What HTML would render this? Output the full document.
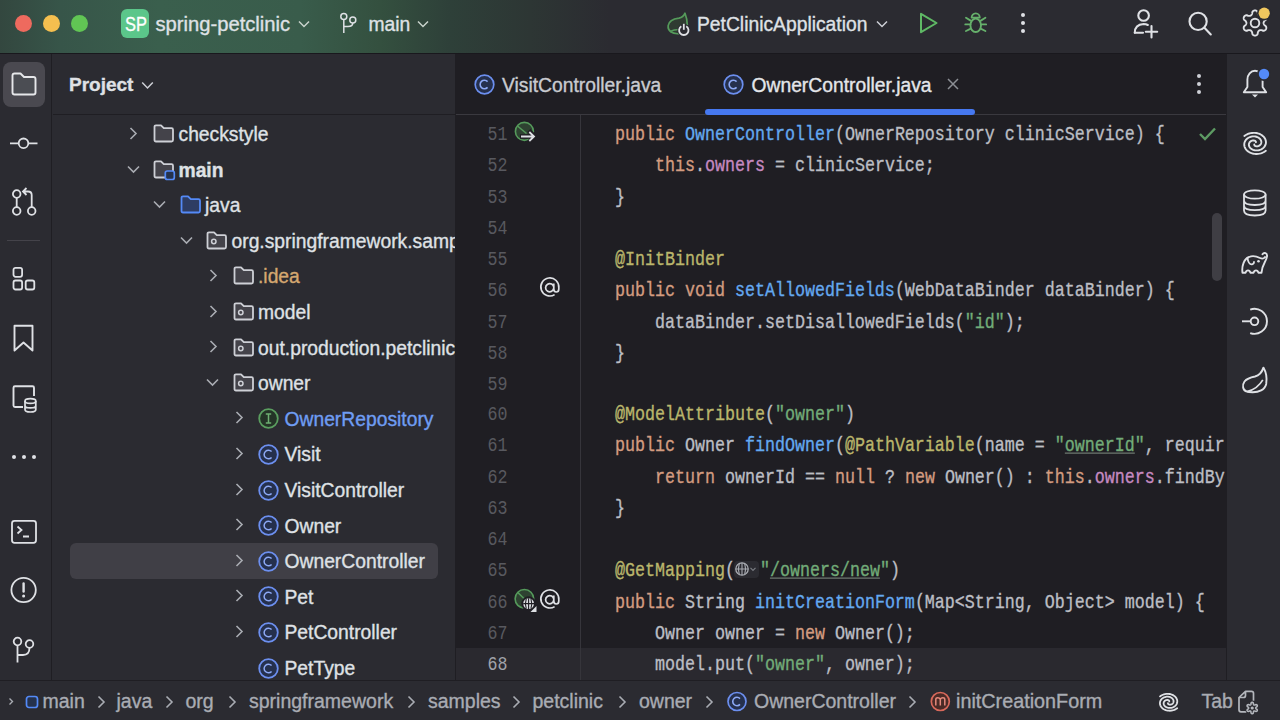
<!DOCTYPE html>
<html><head><meta charset="utf-8">
<style>
*{margin:0;padding:0;box-sizing:border-box}
html,body{width:1280px;height:720px;overflow:hidden;background:#2B2B31;font-family:"Liberation Sans",sans-serif;color:#DFE1E5}
.a{position:absolute}
svg{position:absolute;overflow:visible}
#title{left:0;top:0;width:1280px;height:53px;background:linear-gradient(90deg,#33473F 0px,#375549 60px,#3A5F4D 160px,#395C4B 300px,#34503F 380px,#2E4039 450px,#2D3634 530px,#2B2B31 610px)}
#tb-border{left:0;top:53px;width:1280px;height:1px;background:#19181D}
#lsb{left:51px;top:54px;width:1px;height:627px;background:#1F1E23}
#projb{left:455px;top:54px;width:1px;height:627px;background:#1F1E23}
#editor{left:456px;top:54px;width:770px;height:626px;background:#1F1E23;overflow:hidden}
#rsb{left:1226px;top:54px;width:1px;height:627px;background:#1F1E23}
#statb{left:0;top:680px;width:1280px;height:1px;background:#1F1E23}
.t{position:absolute;white-space:pre;font-size:19.3px;line-height:24px;-webkit-text-stroke:0.35px currentColor}
.code{position:absolute;white-space:pre;font-family:"Liberation Mono",monospace;font-size:16.67px;line-height:31.18px;color:#BCBEC4;left:575px;-webkit-text-stroke:0.3px currentColor}
.ln{position:absolute;white-space:pre;font-family:"Liberation Mono",monospace;font-size:16.67px;line-height:31.18px;color:#58595F;left:487.5px;width:22px}
.kw{color:#D39C80}.fn{color:#64A9F0}.fld{color:#C68AC1}.str{color:#72AC78}.ann{color:#BAB66C}
u{text-decoration-color:#6E7870}
</style></head><body>
<!-- TITLE BAR -->
<div class="a" id="title"></div>
<div class="a" id="tb-border"></div>
<div class="a" style="left:15px;top:14.5px;width:17px;height:17px;border-radius:50%;background:#EE6A5E"></div>
<div class="a" style="left:43px;top:14.5px;width:17px;height:17px;border-radius:50%;background:#F5BF4F"></div>
<div class="a" style="left:71px;top:14.5px;width:17px;height:17px;border-radius:50%;background:#61C554"></div>
<div class="a" style="left:121px;top:9px;width:28px;height:29px;border-radius:6px;background:#5BC68A"></div>
<div class="t" style="left:124.5px;top:12px;font-size:20px;color:#fff;transform:scaleX(0.82);transform-origin:0 0">SP</div>
<div class="t" style="left:155.5px;top:12.3px;font-size:20.2px">spring-petclinic</div>
<svg style="left:298px;top:20px" width="12" height="8"><path d="M1 1.5 L6 6.5 L11 1.5" fill="none" stroke="#C9D3CC" stroke-width="1.5"/></svg>
<svg style="left:338px;top:12px" width="20" height="24"><circle cx="5.8" cy="4.6" r="3" fill="none" stroke="#DFE1E5" stroke-width="1.5"/><circle cx="14.8" cy="8" r="3" fill="none" stroke="#DFE1E5" stroke-width="1.5"/><path d="M5.8 7.6 V21 M5.8 14.5 H10 Q14.8 14.5 14.8 11" fill="none" stroke="#DFE1E5" stroke-width="1.5"/></svg>
<div class="t" style="left:368.5px;top:13px">main</div>
<svg style="left:417px;top:20px" width="12" height="8"><path d="M1 1.5 L6 6.5 L11 1.5" fill="none" stroke="#C9D3CC" stroke-width="1.5"/></svg>
<!-- run config -->
<svg style="left:660px;top:6px" width="40" height="34"><path d="M19.5 27.6 C12 28.5, 7.5 24.5, 8.2 19.5 C9 14.5, 14.5 12.8, 19 12.2 C22 11.6, 24 9.5, 25 7.2 C26.5 11, 27.2 15, 27.3 19" fill="#2F3B31" stroke="#559A5B" stroke-width="1.7" stroke-linejoin="round"/><path d="M10 25.5 C13 24, 16 23.5, 19 23.5" fill="none" stroke="#559A5B" stroke-width="1.5"/><circle cx="23.8" cy="24.2" r="6.4" fill="#2B2B31"/><path d="M21.3 20.3 A4.7 4.7 0 1 0 26.3 20.3" fill="none" stroke="#DFE1E5" stroke-width="1.8"/><path d="M23.8 17.8 V23.8" stroke="#DFE1E5" stroke-width="1.8"/></svg>
<div class="t" style="left:697px;top:12.9px">PetClinicApplication</div>
<svg style="left:876px;top:20px" width="12" height="8"><path d="M1 1.5 L6 6.5 L11 1.5" fill="none" stroke="#CED0D6" stroke-width="1.5"/></svg>
<svg style="left:919px;top:12px" width="20" height="22"><path d="M2 1.8 L17.5 11 L2 20.2 Z" fill="none" stroke="#5FB865" stroke-width="2" stroke-linejoin="round"/></svg>
<svg style="left:955px;top:6px" width="42" height="34"><path d="M16.6 11.6 A4.1 4.3 0 0 1 24.8 11.6 Z" fill="none" stroke="#66B06B" stroke-width="1.8" stroke-linejoin="round"/><ellipse cx="20.7" cy="19.3" rx="5.3" ry="6.7" fill="none" stroke="#66B06B" stroke-width="1.9"/><path d="M15.6 14.6 L11 11.8 M15.4 18.4 H10.3 M15.8 22.6 L11 25 M25.8 14.6 L30.4 11.8 M26 18.4 H31.1 M25.6 22.6 L30.4 25" fill="none" stroke="#66B06B" stroke-width="1.9" stroke-linecap="round"/></svg>
<div class="a" style="left:1020.5px;top:13px;width:4px;height:4px;border-radius:50%;background:#DFE1E5"></div>
<div class="a" style="left:1020.5px;top:21px;width:4px;height:4px;border-radius:50%;background:#DFE1E5"></div>
<div class="a" style="left:1020.5px;top:29px;width:4px;height:4px;border-radius:50%;background:#DFE1E5"></div>
<svg style="left:1125px;top:4px" width="40" height="40"><circle cx="18.6" cy="11.5" r="5.3" fill="none" stroke="#DFE1E5" stroke-width="2.1"/><path d="M9.8 28.8 Q9.8 20.5 18.6 20 Q21 20 22.8 21" fill="none" stroke="#DFE1E5" stroke-width="2.1" stroke-linecap="round"/><path d="M9.8 28.8 H18" fill="none" stroke="#DFE1E5" stroke-width="2.1" stroke-linecap="round"/><path d="M26.5 22 V33.5 M20.8 27.7 H32.2" fill="none" stroke="#DFE1E5" stroke-width="2.1" stroke-linecap="round"/></svg>
<svg style="left:1185px;top:8px" width="30" height="30"><circle cx="13.1" cy="13.4" r="8.6" fill="none" stroke="#DFE1E5" stroke-width="2.1"/><path d="M19.4 19.7 L25.8 26.4" stroke="#DFE1E5" stroke-width="2.1" stroke-linecap="round"/></svg>
<svg style="left:1241px;top:8px" width="32" height="32"><path d="M22.60 15.00 L22.61 15.23 L22.65 15.45 L22.71 15.69 L22.79 15.92 L22.90 16.17 L23.03 16.43 L23.20 16.70 L23.40 17.00 L23.67 17.32 L24.24 17.74 L24.79 18.20 L25.02 18.58 L25.17 18.95 L25.25 19.32 L25.29 19.68 L25.29 20.03 L25.25 20.37 L25.17 20.69 L25.06 21.01 L24.91 21.30 L24.73 21.58 L24.52 21.83 L24.27 22.06 L24.00 22.27 L23.70 22.44 L23.37 22.59 L23.01 22.69 L22.61 22.75 L22.17 22.75 L21.50 22.50 L20.84 22.21 L20.43 22.14 L20.08 22.11 L19.76 22.11 L19.46 22.12 L19.20 22.15 L18.95 22.20 L18.72 22.26 L18.50 22.35 L18.30 22.45 L18.11 22.57 L17.93 22.72 L17.76 22.88 L17.60 23.07 L17.43 23.29 L17.28 23.54 L17.12 23.82 L16.97 24.14 L16.82 24.53 L16.74 25.24 L16.63 25.95 L16.41 26.34 L16.16 26.65 L15.89 26.91 L15.60 27.12 L15.29 27.29 L14.98 27.43 L14.66 27.52 L14.33 27.58 L14.00 27.60 L13.67 27.58 L13.34 27.52 L13.02 27.43 L12.71 27.29 L12.40 27.12 L12.11 26.91 L11.84 26.65 L11.59 26.34 L11.37 25.95 L11.26 25.24 L11.18 24.53 L11.03 24.14 L10.88 23.82 L10.72 23.54 L10.57 23.29 L10.40 23.07 L10.24 22.88 L10.07 22.72 L9.89 22.57 L9.70 22.45 L9.50 22.35 L9.28 22.26 L9.05 22.20 L8.80 22.15 L8.54 22.12 L8.24 22.11 L7.92 22.11 L7.57 22.14 L7.16 22.21 L6.50 22.50 L5.83 22.75 L5.39 22.75 L4.99 22.69 L4.63 22.59 L4.30 22.44 L4.00 22.27 L3.73 22.06 L3.48 21.83 L3.27 21.58 L3.09 21.30 L2.94 21.01 L2.83 20.69 L2.75 20.37 L2.71 20.03 L2.71 19.68 L2.75 19.32 L2.83 18.95 L2.98 18.58 L3.21 18.20 L3.76 17.74 L4.33 17.32 L4.60 17.00 L4.80 16.70 L4.97 16.43 L5.10 16.17 L5.21 15.92 L5.29 15.69 L5.35 15.45 L5.39 15.23 L5.40 15.00 L5.39 14.77 L5.35 14.55 L5.29 14.31 L5.21 14.08 L5.10 13.83 L4.97 13.57 L4.80 13.30 L4.60 13.00 L4.33 12.68 L3.76 12.26 L3.21 11.80 L2.98 11.42 L2.83 11.05 L2.75 10.68 L2.71 10.32 L2.71 9.97 L2.75 9.63 L2.83 9.31 L2.94 8.99 L3.09 8.70 L3.27 8.42 L3.48 8.17 L3.73 7.94 L4.00 7.73 L4.30 7.56 L4.63 7.41 L4.99 7.31 L5.39 7.25 L5.83 7.25 L6.50 7.50 L7.16 7.79 L7.57 7.86 L7.92 7.89 L8.24 7.89 L8.54 7.88 L8.80 7.85 L9.05 7.80 L9.28 7.74 L9.50 7.65 L9.70 7.55 L9.89 7.43 L10.07 7.28 L10.24 7.12 L10.40 6.93 L10.57 6.71 L10.72 6.46 L10.88 6.18 L11.03 5.86 L11.18 5.47 L11.26 4.76 L11.37 4.05 L11.59 3.66 L11.84 3.35 L12.11 3.09 L12.40 2.88 L12.71 2.71 L13.02 2.57 L13.34 2.48 L13.67 2.42 L14.00 2.40 L14.33 2.42 L14.66 2.48 L14.98 2.57 L15.29 2.71 L15.60 2.88 L15.89 3.09 L16.16 3.35 L16.41 3.66 L16.63 4.05 L16.74 4.76 L16.82 5.47 L16.97 5.86 L17.12 6.18 L17.28 6.46 L17.43 6.71 L17.60 6.93 L17.76 7.12 L17.93 7.28 L18.11 7.43 L18.30 7.55 L18.50 7.65 L18.72 7.74 L18.95 7.80 L19.20 7.85 L19.46 7.88 L19.76 7.89 L20.08 7.89 L20.43 7.86 L20.84 7.79 L21.50 7.50 L22.17 7.25 L22.61 7.25 L23.01 7.31 L23.37 7.41 L23.70 7.56 L24.00 7.73 L24.27 7.94 L24.52 8.17 L24.73 8.42 L24.91 8.70 L25.06 8.99 L25.17 9.31 L25.25 9.63 L25.29 9.97 L25.29 10.32 L25.25 10.68 L25.17 11.05 L25.02 11.42 L24.79 11.80 L24.24 12.26 L23.67 12.68 L23.40 13.00 L23.20 13.30 L23.03 13.57 L22.90 13.83 L22.79 14.08 L22.71 14.31 L22.65 14.55 L22.61 14.77 L22.60 15.00 Z" fill="none" stroke="#DFE1E5" stroke-width="1.9" stroke-linejoin="round"/><circle cx="14" cy="15" r="4.3" fill="none" stroke="#DFE1E5" stroke-width="1.9"/><circle cx="23.2" cy="5.2" r="7.3" fill="#2B2B31"/><circle cx="23.2" cy="5.2" r="5.6" fill="#F0C75E"/></svg>
<!-- LEFT STRIPE -->
<div class="a" id="lsb"></div>
<div class="a" style="left:3px;top:62px;width:42px;height:45px;border-radius:8px;background:#4A4950"></div>
<svg style="left:11px;top:72px" width="26" height="24"><path d="M1.5 3.5 Q1.5 1.5 3.5 1.5 H9.5 L13 5 H22.5 Q24.5 5 24.5 7 V20.5 Q24.5 22.5 22.5 22.5 H3.5 Q1.5 22.5 1.5 20.5 Z" fill="#4B4D53" stroke="#E6E7EA" stroke-width="1.9" stroke-linejoin="round"/></svg>
<svg style="left:9px;top:137px" width="30" height="14"><path d="M1 6.3 H9.5 M19.5 6.3 H28.5" stroke="#DFE1E5" stroke-width="1.8"/><circle cx="14.5" cy="6.3" r="4.8" fill="none" stroke="#DFE1E5" stroke-width="1.8"/></svg>
<svg style="left:10px;top:184px" width="28" height="34"><circle cx="6.7" cy="10" r="3.8" fill="none" stroke="#DFE1E5" stroke-width="1.8"/><circle cx="6.7" cy="27" r="3.8" fill="none" stroke="#DFE1E5" stroke-width="1.8"/><circle cx="21.7" cy="27" r="3.8" fill="none" stroke="#DFE1E5" stroke-width="1.8"/><path d="M6.7 13.8 V23.2 M21.7 23.2 V11 Q21.7 7.5 18 7.5 H13.5 M16.5 4 L13 7.5 L16.5 11" fill="none" stroke="#DFE1E5" stroke-width="1.8"/></svg>
<div class="a" style="left:7px;top:240px;width:33px;height:1px;background:#44434A"></div>
<svg style="left:11px;top:266px" width="26" height="26"><rect x="2.5" y="1.8" width="8.6" height="9" rx="2" fill="none" stroke="#DFE1E5" stroke-width="1.8"/><rect x="2.5" y="14.5" width="8.6" height="9" rx="2" fill="none" stroke="#DFE1E5" stroke-width="1.8"/><rect x="14.7" y="14.5" width="8.6" height="9" rx="2" fill="none" stroke="#DFE1E5" stroke-width="1.8"/></svg>
<svg style="left:12px;top:324px" width="24" height="30"><path d="M2.5 1.8 H20.5 V26.5 L11.5 18.5 L2.5 26.5 Z" fill="none" stroke="#DFE1E5" stroke-width="1.9" stroke-linejoin="round"/></svg>
<svg style="left:11px;top:384px" width="30" height="30"><path d="M12 23 H4 Q2.5 23 2.5 21.5 V3.8 Q2.5 2.3 4 2.3 H21.5 Q23 2.3 23 3.8 V12" fill="none" stroke="#DFE1E5" stroke-width="1.9"/><ellipse cx="19.4" cy="17" rx="5.4" ry="2.4" fill="#2B2B31" stroke="#DFE1E5" stroke-width="1.7"/><path d="M14 17 V25.5 Q14 28 19.4 28 Q24.8 28 24.8 25.5 V17 M14 21.5 Q14 23.9 19.4 23.9 Q24.8 23.9 24.8 21.5" fill="none" stroke="#DFE1E5" stroke-width="1.7"/></svg>
<div class="a" style="left:11.5px;top:454.5px;width:4.2px;height:4.2px;border-radius:50%;background:#DFE1E5"></div>
<div class="a" style="left:21.5px;top:454.5px;width:4.2px;height:4.2px;border-radius:50%;background:#DFE1E5"></div>
<div class="a" style="left:31.5px;top:454.5px;width:4.2px;height:4.2px;border-radius:50%;background:#DFE1E5"></div>
<svg style="left:10px;top:519px" width="28" height="26"><rect x="2" y="1.8" width="24" height="22" rx="2.5" fill="none" stroke="#DFE1E5" stroke-width="1.8"/><path d="M7.5 7.5 L11.5 11 L7.5 14.5 M13 17.5 H19" fill="none" stroke="#DFE1E5" stroke-width="1.8"/></svg>
<svg style="left:9px;top:576px" width="30" height="30"><circle cx="14.6" cy="14" r="12.2" fill="none" stroke="#DFE1E5" stroke-width="1.8"/><path d="M14.6 7.5 V15.5" stroke="#DFE1E5" stroke-width="2.4" stroke-linecap="round"/><circle cx="14.6" cy="20" r="1.5" fill="#DFE1E5"/></svg>
<svg style="left:10px;top:634px" width="26" height="30"><circle cx="7.5" cy="7.5" r="3.8" fill="none" stroke="#DFE1E5" stroke-width="1.8"/><circle cx="19.5" cy="10" r="3.8" fill="none" stroke="#DFE1E5" stroke-width="1.8"/><path d="M7.5 11.3 V28.5 M7.5 21 H13 Q19.5 21 19.5 13.8" fill="none" stroke="#DFE1E5" stroke-width="1.8"/></svg>
<!-- PROJECT PANEL -->
<div class="a" style="left:52px;top:54px;width:403px;height:626px;background:#2B2B31"></div>
<div class="a" style="left:70px;top:543px;width:368px;height:35.5px;border-radius:6px;background:#403F46"></div>
<div class="a" style="left:53px;top:114px;width:402px;height:1px;background:#1F1E23"></div>
<div class="t" style="left:69px;top:73px;font-weight:bold;font-size:19px">Project</div>
<svg style="left:141px;top:81px" width="13" height="9"><path d="M1.2 1.5 L6.5 7 L11.8 1.5" fill="none" stroke="#CED0D6" stroke-width="1.5"/></svg>
<div class="a" style="left:53px;top:115px;width:402px;height:565px;overflow:hidden">
<svg style="left:76.0px;top:11.5px" width="9" height="13"><path d="M1.5 1 L7 6.5 L1.5 12" fill="none" stroke="#A9ACB2" stroke-width="1.6"/></svg>
<svg style="left:100.0px;top:9.0px" width="22" height="19"><path d="M1.5 2.8 Q1.5 1.3 3 1.3 H8 L10.8 4.2 H18.5 Q20 4.2 20 5.7 V16 Q20 17.5 18.5 17.5 H3 Q1.5 17.5 1.5 16 Z" fill="#44434A" stroke="#CED0D6" stroke-width="1.8" stroke-linejoin="round"/></svg>
<div class="t" style="left:125.5px;top:7.9px">checkstyle</div>
<svg style="left:73.5px;top:49.6px" width="13" height="9"><path d="M1 1.5 L6.5 7 L12 1.5" fill="none" stroke="#A9ACB2" stroke-width="1.6"/></svg>
<svg style="left:100.0px;top:44.6px" width="22" height="19"><path d="M1.5 2.8 Q1.5 1.3 3 1.3 H8 L10.8 4.2 H18.5 Q20 4.2 20 5.7 V16 Q20 17.5 18.5 17.5 H3 Q1.5 17.5 1.5 16 Z" fill="#44434A" stroke="#CED0D6" stroke-width="1.8" stroke-linejoin="round"/><rect x="12.3" y="11" width="9" height="8.5" rx="2" fill="#25324D" stroke="#548AF7" stroke-width="1.7"/></svg>
<div class="t" style="left:125.5px;top:43.5px;font-weight:bold">main</div>
<svg style="left:100.0px;top:85.2px" width="13" height="9"><path d="M1 1.5 L6.5 7 L12 1.5" fill="none" stroke="#A9ACB2" stroke-width="1.6"/></svg>
<svg style="left:126.5px;top:80.2px" width="22" height="19"><path d="M1.5 2.8 Q1.5 1.3 3 1.3 H8 L10.8 4.2 H18.5 Q20 4.2 20 5.7 V16 Q20 17.5 18.5 17.5 H3 Q1.5 17.5 1.5 16 Z" fill="#2E3D63" stroke="#548AF7" stroke-width="1.8" stroke-linejoin="round"/></svg>
<div class="t" style="left:152.0px;top:79.1px">java</div>
<svg style="left:126.5px;top:120.8px" width="13" height="9"><path d="M1 1.5 L6.5 7 L12 1.5" fill="none" stroke="#A9ACB2" stroke-width="1.6"/></svg>
<svg style="left:153.0px;top:115.8px" width="22" height="19"><path d="M1.5 2.8 Q1.5 1.3 3 1.3 H8 L10.8 4.2 H18.5 Q20 4.2 20 5.7 V16 Q20 17.5 18.5 17.5 H3 Q1.5 17.5 1.5 16 Z" fill="#44434A" stroke="#CED0D6" stroke-width="1.8" stroke-linejoin="round"/><circle cx="7.8" cy="10.5" r="2.2" fill="none" stroke="#CED0D6" stroke-width="1.5"/></svg>
<div class="t" style="left:178.5px;top:114.7px">org.springframework.samples.petclinic</div>
<svg style="left:155.5px;top:153.9px" width="9" height="13"><path d="M1.5 1 L7 6.5 L1.5 12" fill="none" stroke="#A9ACB2" stroke-width="1.6"/></svg>
<svg style="left:179.5px;top:151.4px" width="22" height="19"><path d="M1.5 2.8 Q1.5 1.3 3 1.3 H8 L10.8 4.2 H18.5 Q20 4.2 20 5.7 V16 Q20 17.5 18.5 17.5 H3 Q1.5 17.5 1.5 16 Z" fill="#44434A" stroke="#CED0D6" stroke-width="1.8" stroke-linejoin="round"/></svg>
<div class="t" style="left:205.0px;top:150.3px;color:#D4A770">.idea</div>
<svg style="left:155.5px;top:189.5px" width="9" height="13"><path d="M1.5 1 L7 6.5 L1.5 12" fill="none" stroke="#A9ACB2" stroke-width="1.6"/></svg>
<svg style="left:179.5px;top:187.0px" width="22" height="19"><path d="M1.5 2.8 Q1.5 1.3 3 1.3 H8 L10.8 4.2 H18.5 Q20 4.2 20 5.7 V16 Q20 17.5 18.5 17.5 H3 Q1.5 17.5 1.5 16 Z" fill="#44434A" stroke="#CED0D6" stroke-width="1.8" stroke-linejoin="round"/><circle cx="7.8" cy="10.5" r="2.2" fill="none" stroke="#CED0D6" stroke-width="1.5"/></svg>
<div class="t" style="left:205.0px;top:185.9px">model</div>
<svg style="left:155.5px;top:225.1px" width="9" height="13"><path d="M1.5 1 L7 6.5 L1.5 12" fill="none" stroke="#A9ACB2" stroke-width="1.6"/></svg>
<svg style="left:179.5px;top:222.6px" width="22" height="19"><path d="M1.5 2.8 Q1.5 1.3 3 1.3 H8 L10.8 4.2 H18.5 Q20 4.2 20 5.7 V16 Q20 17.5 18.5 17.5 H3 Q1.5 17.5 1.5 16 Z" fill="#44434A" stroke="#CED0D6" stroke-width="1.8" stroke-linejoin="round"/><circle cx="7.8" cy="10.5" r="2.2" fill="none" stroke="#CED0D6" stroke-width="1.5"/></svg>
<div class="t" style="left:205.0px;top:221.5px">out.production.petclinic</div>
<svg style="left:153.0px;top:263.2px" width="13" height="9"><path d="M1 1.5 L6.5 7 L12 1.5" fill="none" stroke="#A9ACB2" stroke-width="1.6"/></svg>
<svg style="left:179.5px;top:258.2px" width="22" height="19"><path d="M1.5 2.8 Q1.5 1.3 3 1.3 H8 L10.8 4.2 H18.5 Q20 4.2 20 5.7 V16 Q20 17.5 18.5 17.5 H3 Q1.5 17.5 1.5 16 Z" fill="#44434A" stroke="#CED0D6" stroke-width="1.8" stroke-linejoin="round"/><circle cx="7.8" cy="10.5" r="2.2" fill="none" stroke="#CED0D6" stroke-width="1.5"/></svg>
<div class="t" style="left:205.0px;top:257.1px">owner</div>
<svg style="left:182.0px;top:296.3px" width="9" height="13"><path d="M1.5 1 L7 6.5 L1.5 12" fill="none" stroke="#A9ACB2" stroke-width="1.6"/></svg>
<svg style="left:204.5px;top:293.3px" width="21" height="21"><circle cx="10.5" cy="10.5" r="9.3" fill="#243327" stroke="#5A9E5F" stroke-width="1.8"/><path d="M7.8 6 H13.2 M10.5 6 V15 M7.8 15 H13.2" fill="none" stroke="#6DAF72" stroke-width="1.5"/></svg>
<div class="t" style="left:231.5px;top:292.7px;color:#6F9DF3">OwnerRepository</div>
<svg style="left:182.0px;top:331.9px" width="9" height="13"><path d="M1.5 1 L7 6.5 L1.5 12" fill="none" stroke="#A9ACB2" stroke-width="1.6"/></svg>
<svg style="left:204.5px;top:328.9px" width="21" height="21"><circle cx="10.5" cy="10.5" r="9.3" fill="#25304D" stroke="#6C8FEF" stroke-width="1.8"/><path d="M13.6 7.6 A4.3 4.3 0 1 0 13.6 13.4" fill="none" stroke="#8DA9F5" stroke-width="1.5"/></svg>
<div class="t" style="left:231.5px;top:328.3px">Visit</div>
<svg style="left:182.0px;top:367.5px" width="9" height="13"><path d="M1.5 1 L7 6.5 L1.5 12" fill="none" stroke="#A9ACB2" stroke-width="1.6"/></svg>
<svg style="left:204.5px;top:364.5px" width="21" height="21"><circle cx="10.5" cy="10.5" r="9.3" fill="#25304D" stroke="#6C8FEF" stroke-width="1.8"/><path d="M13.6 7.6 A4.3 4.3 0 1 0 13.6 13.4" fill="none" stroke="#8DA9F5" stroke-width="1.5"/></svg>
<div class="t" style="left:231.5px;top:363.9px">VisitController</div>
<svg style="left:182.0px;top:403.1px" width="9" height="13"><path d="M1.5 1 L7 6.5 L1.5 12" fill="none" stroke="#A9ACB2" stroke-width="1.6"/></svg>
<svg style="left:204.5px;top:400.1px" width="21" height="21"><circle cx="10.5" cy="10.5" r="9.3" fill="#25304D" stroke="#6C8FEF" stroke-width="1.8"/><path d="M13.6 7.6 A4.3 4.3 0 1 0 13.6 13.4" fill="none" stroke="#8DA9F5" stroke-width="1.5"/></svg>
<div class="t" style="left:231.5px;top:399.5px">Owner</div>
<svg style="left:182.0px;top:438.7px" width="9" height="13"><path d="M1.5 1 L7 6.5 L1.5 12" fill="none" stroke="#A9ACB2" stroke-width="1.6"/></svg>
<svg style="left:204.5px;top:435.7px" width="21" height="21"><circle cx="10.5" cy="10.5" r="9.3" fill="#25304D" stroke="#6C8FEF" stroke-width="1.8"/><path d="M13.6 7.6 A4.3 4.3 0 1 0 13.6 13.4" fill="none" stroke="#8DA9F5" stroke-width="1.5"/></svg>
<div class="t" style="left:231.5px;top:435.1px">OwnerController</div>
<svg style="left:182.0px;top:474.3px" width="9" height="13"><path d="M1.5 1 L7 6.5 L1.5 12" fill="none" stroke="#A9ACB2" stroke-width="1.6"/></svg>
<svg style="left:204.5px;top:471.3px" width="21" height="21"><circle cx="10.5" cy="10.5" r="9.3" fill="#25304D" stroke="#6C8FEF" stroke-width="1.8"/><path d="M13.6 7.6 A4.3 4.3 0 1 0 13.6 13.4" fill="none" stroke="#8DA9F5" stroke-width="1.5"/></svg>
<div class="t" style="left:231.5px;top:470.7px">Pet</div>
<svg style="left:182.0px;top:509.9px" width="9" height="13"><path d="M1.5 1 L7 6.5 L1.5 12" fill="none" stroke="#A9ACB2" stroke-width="1.6"/></svg>
<svg style="left:204.5px;top:506.9px" width="21" height="21"><circle cx="10.5" cy="10.5" r="9.3" fill="#25304D" stroke="#6C8FEF" stroke-width="1.8"/><path d="M13.6 7.6 A4.3 4.3 0 1 0 13.6 13.4" fill="none" stroke="#8DA9F5" stroke-width="1.5"/></svg>
<div class="t" style="left:231.5px;top:506.3px">PetController</div>
<svg style="left:204.5px;top:542.5px" width="21" height="21"><circle cx="10.5" cy="10.5" r="9.3" fill="#25304D" stroke="#6C8FEF" stroke-width="1.8"/><path d="M13.6 7.6 A4.3 4.3 0 1 0 13.6 13.4" fill="none" stroke="#8DA9F5" stroke-width="1.5"/></svg>
<div class="t" style="left:231.5px;top:541.9px">PetType</div>
</div>
<div class="a" id="projb"></div>
<!-- EDITOR -->
<div class="a" id="editor"></div>
<div class="a" style="left:456px;top:647.5px;width:770px;height:32.5px;background:#2A292F"></div>
<div class="a" style="left:456px;top:114px;width:770px;height:1px;background:#3A393F"></div>
<div class="a" style="left:579.5px;top:115px;width:1px;height:565px;background:#36353B"></div>
<svg style="left:473.5px;top:73.5px" width="21" height="21"><circle cx="10.5" cy="10.5" r="9.3" fill="#25304D" stroke="#6C8FEF" stroke-width="1.7"/><path d="M13.6 7.6 A4.3 4.3 0 1 0 13.6 13.4" fill="none" stroke="#8DA9F5" stroke-width="1.6"/></svg>
<div class="t" style="left:502px;top:74px;color:#C9CBD0">VisitController.java</div>
<svg style="left:722.5px;top:73.5px" width="21" height="21"><circle cx="10.5" cy="10.5" r="9.3" fill="#25304D" stroke="#6C8FEF" stroke-width="1.7"/><path d="M13.6 7.6 A4.3 4.3 0 1 0 13.6 13.4" fill="none" stroke="#8DA9F5" stroke-width="1.6"/></svg>
<div class="t" style="left:751.5px;top:74px;color:#E4E6EA">OwnerController.java</div>
<svg style="left:947px;top:78px" width="12" height="12"><path d="M1 1 L11 11 M11 1 L1 11" stroke="#8C8F95" stroke-width="1.5"/></svg>
<div class="a" style="left:705px;top:109px;width:270px;height:5.5px;border-radius:3px;background:#4678F0"></div>
<div class="a" style="left:1197px;top:74px;width:4px;height:4px;border-radius:50%;background:#CED0D6"></div>
<div class="a" style="left:1197px;top:82px;width:4px;height:4px;border-radius:50%;background:#CED0D6"></div>
<div class="a" style="left:1197px;top:90px;width:4px;height:4px;border-radius:50%;background:#CED0D6"></div>
<div class="ln" style="top:120.16px;line-height:24.944px;transform:scaleY(1.25);transform-origin:0 0;text-align:right;width:20px">51
52
53
54
55
56
57
58
59
60
61
62
63
64
65
66
67
<span style="color:#A1A3AB">68</span></div>
<div class="a" style="left:456px;top:115px;width:770px;height:565px;overflow:hidden"><div class="code" style="left:119px;top:5.16px;line-height:24.944px;transform:scaleY(1.25);transform-origin:0 0">    <span class="kw">public</span> <span class="fn">OwnerController</span>(OwnerRepository clinicService) {
        <span class="kw">this</span>.<span class="fld">owners</span> = clinicService;
    }

    <span class="ann">@InitBinder</span>
    <span class="kw">public void</span> <span class="fn">setAllowedFields</span>(WebDataBinder dataBinder) {
        dataBinder.setDisallowedFields(<span class="str">"id"</span>);
    }

    <span class="ann">@ModelAttribute</span>(<span class="str">"owner"</span>)
    <span class="kw">public</span> Owner <span class="fn">findOwner</span>(<span class="ann">@PathVariable</span>(name = <span class="str">"<u>ownerId</u>"</span>, requir
        <span class="kw">return</span> ownerId == <span class="kw">null</span> ? <span class="kw">new</span> Owner() : <span class="kw">this</span>.<span class="fld">owners</span>.findBy
    }

    <span class="ann">@GetMapping</span>(<span style="display:inline-block;width:25px"></span><span class="str">"<u>/owners/new</u>"</span>)
    <span class="kw">public</span> String <span class="fn">initCreationForm</span>(Map&lt;String, Object&gt; model) {
        Owner owner = <span class="kw">new</span> Owner();
        model.put(<span class="str">"owner"</span>, owner);</div></div>
<!-- EDITOR EXTRAS -->
<div class="a" style="left:1212px;top:213px;width:10px;height:68px;border-radius:5px;background:#3F3E44"></div>
<svg style="left:1198px;top:126px" width="20" height="16"><path d="M2 8 L7 13 L17 2.5" fill="none" stroke="#5D9B63" stroke-width="2.4"/></svg>
<svg style="left:500px;top:110px" width="44" height="40"><circle cx="24.4" cy="21.4" r="9" fill="#2E4231" stroke="#559A5B" stroke-width="1.6"/><path d="M17.5 16 L26.5 23.5" stroke="#559A5B" stroke-width="1.6"/><path d="M20 26.5 H35 M28.8 20.5 L34.5 26.5 L28.8 32.5" fill="none" stroke="#1F1E23" stroke-width="4.5"/><path d="M21 26.5 H34 M29.3 22 L34 26.5 L29.3 31" fill="none" stroke="#DFE1E5" stroke-width="1.8"/></svg>
<svg style="left:539px;top:276.7px" width="22" height="22"><path d="M15.6 17.6 A9 9 0 1 1 19.8 10.8 V12 Q19.8 15 17.3 15 Q14.8 15 14.8 12 V6.5 M14.8 10.8 A4.1 4.1 0 1 1 14.8 10.6" fill="none" stroke="#DFE1E5" stroke-width="1.7"/></svg>
<svg style="left:539px;top:589.0px" width="22" height="22"><path d="M15.6 17.6 A9 9 0 1 1 19.8 10.8 V12 Q19.8 15 17.3 15 Q14.8 15 14.8 12 V6.5 M14.8 10.8 A4.1 4.1 0 1 1 14.8 10.6" fill="none" stroke="#DFE1E5" stroke-width="1.7"/></svg>
<svg style="left:500px;top:580px" width="44" height="40"><circle cx="24.4" cy="18.8" r="9.3" fill="#2E4231" stroke="#559A5B" stroke-width="1.6"/><path d="M17.8 12.5 L25 19.5" stroke="#559A5B" stroke-width="1.6"/><circle cx="28.6" cy="23.6" r="7.3" fill="#1F1E23"/><circle cx="28.6" cy="23.6" r="5.4" fill="#DFE1E5"/><path d="M23.2 23.6 H34 M28.6 18.2 V29 M26.3 18.6 Q24.6 23.6 26.3 28.6 M30.9 18.6 Q32.6 23.6 30.9 28.6" fill="none" stroke="#1F1E23" stroke-width="1.1"/><path d="M30.5 32 L36.5 32 L36.5 26 Z" fill="#DFE1E5"/></svg>
<div class="a" style="left:734px;top:560.5px;width:25px;height:17px;border-radius:4px;background:#2B2B31"></div>
<svg style="left:734px;top:561px" width="26" height="16"><circle cx="8" cy="8" r="6.2" fill="none" stroke="#A9ACB2" stroke-width="1.3"/><path d="M1.8 8 H14.2 M8 1.8 V14.2 M5.3 2.5 Q3.5 8 5.3 13.5 M10.7 2.5 Q12.5 8 10.7 13.5" fill="none" stroke="#A9ACB2" stroke-width="1.1"/><path d="M16.5 6.8 L19 9.3 L21.5 6.8" fill="none" stroke="#7A7D83" stroke-width="1.2"/></svg>
<!-- RIGHT STRIPE -->
<div class="a" style="left:1227px;top:54px;width:53px;height:626px;background:#2B2B31"></div>
<div class="a" id="rsb"></div>
<svg style="left:1240px;top:66px" width="32" height="34"><path d="M3.8 26.3 H26.2 L22.6 21 V13.5 A7.6 8.8 0 0 0 7.4 13.5 V21 Z" fill="none" stroke="#DFE1E5" stroke-width="1.9" stroke-linejoin="round"/><path d="M12 28.6 L15 31.6 L18 28.6 Z" fill="#DFE1E5"/><circle cx="24" cy="8" r="7" fill="#2B2B31"/><circle cx="24" cy="8" r="5.2" fill="#548AF7"/></svg>
<svg style="left:1238px;top:126px" width="34" height="34"><path d="M6.34 10.05 L7.46 9.24 L8.67 8.54 L9.95 7.95 L11.28 7.49 L12.66 7.15 L14.05 6.93 L15.46 6.84 L16.85 6.87 L18.21 7.02 L19.54 7.29 L20.80 7.67 L21.99 8.16 L23.10 8.74 L24.12 9.40 L25.03 10.14 L25.82 10.95 L26.50 11.81 L27.05 12.72 L27.47 13.66 L27.76 14.62 L27.92 15.58 L27.95 16.54 L27.85 17.48 L27.63 18.40 L27.29 19.28 L26.84 20.12 L26.30 20.89 L25.66 21.61 L24.94 22.25 L24.15 22.82 L23.30 23.30 L22.41 23.70 L21.48 24.02 L20.53 24.24 L19.57 24.38 L18.62 24.42 L17.68 24.39 L16.77 24.27 L15.90 24.07 L15.08 23.80 L14.31 23.46 L13.61 23.07 L12.97 22.62 L12.42 22.13 L11.95 21.60 L11.56 21.04 L11.26 20.47 L11.04 19.88 L10.92 19.29 L10.87 18.71 L10.91 18.14 L11.03 17.59 L11.22 17.07 L11.47 16.59 L11.78 16.15 L12.15 15.75 L12.56 15.40 L13.00 15.11 L13.47 14.87 L13.96 14.68 L14.45 14.56 L14.94 14.48 L15.42 14.47 L15.88 14.50 L16.32 14.58 L16.71 14.71 L17.07 14.88 L17.38 15.09 L17.63 15.33 L17.81 15.59 L17.92 15.89 L17.91 16.26 M27.86 24.75 L26.74 25.56 L25.53 26.26 L24.25 26.85 L22.92 27.31 L21.54 27.65 L20.15 27.87 L18.74 27.96 L17.35 27.93 L15.99 27.78 L14.66 27.51 L13.40 27.13 L12.21 26.64 L11.10 26.06 L10.08 25.40 L9.17 24.66 L8.38 23.85 L7.70 22.99 L7.15 22.08 L6.73 21.14 L6.44 20.18 L6.28 19.22 L6.25 18.26 L6.35 17.32 L6.57 16.40 L6.91 15.52 L7.36 14.68 L7.90 13.91 L8.54 13.19 L9.26 12.55 L10.05 11.98 L10.90 11.50 L11.79 11.10 L12.72 10.78 L13.67 10.56 L14.63 10.42 L15.58 10.38 L16.52 10.41 L17.43 10.53 L18.30 10.73 L19.12 11.00 L19.89 11.34 L20.59 11.73 L21.23 12.18 L21.78 12.67 L22.25 13.20 L22.64 13.76 L22.94 14.33 L23.16 14.92 L23.28 15.51 L23.33 16.09 L23.29 16.66 L23.17 17.21 L22.98 17.73 L22.73 18.21 L22.42 18.65 L22.05 19.05 L21.64 19.40 L21.20 19.69 L20.73 19.93 L20.24 20.12 L19.75 20.24 L19.26 20.32 L18.78 20.33 L18.32 20.30 L17.88 20.22 L17.49 20.09 L17.13 19.92 L16.82 19.71 L16.57 19.47 L16.39 19.21 L16.28 18.91 L16.29 18.54" fill="none" stroke="#DFE1E5" stroke-width="1.9" stroke-linecap="round" stroke-linejoin="round"/></svg>
<svg style="left:1242px;top:189px" width="26" height="30"><ellipse cx="12.8" cy="5.5" rx="10.8" ry="4.2" fill="none" stroke="#DFE1E5" stroke-width="1.8"/><path d="M2 5.5 V21.5 Q2 26.5 12.8 26.5 Q23.6 26.5 23.6 21.5 V5.5 M2 11.5 Q2 16 12.8 16 Q23.6 16 23.6 11.5 M2 16.5 Q2 21.2 12.8 21.2 Q23.6 21.2 23.6 16.5" fill="none" stroke="#DFE1E5" stroke-width="1.8"/></svg>
<svg style="left:1236px;top:246px" width="38" height="34"><path d="M26.5 8.2 C28 6, 31.5 7, 31 10.5 C30.5 15, 26 18, 25.5 26.8 L22.5 26.8 C21.5 23.5, 18.5 23.5, 17.5 26.8 L14.5 26.8 C13.5 23.5, 10.5 23.5, 9.5 26.8 L6.5 26.8 C5.5 20, 8 13, 13 11 C17 9.2, 21 10.5, 24 12 C26 13, 28 12.5, 29 11" fill="none" stroke="#DFE1E5" stroke-width="1.9" stroke-linejoin="round" stroke-linecap="round"/><path d="M11.5 12 C12 16, 13.5 18.5, 16 18.3 C17.5 18, 18 17, 18 16" fill="none" stroke="#DFE1E5" stroke-width="1.8" stroke-linecap="round"/><circle cx="22.5" cy="15.3" r="1.3" fill="#DFE1E5"/></svg>
<svg style="left:1236px;top:300px" width="38" height="40"><path d="M14.2 9.55 A12.5 12.5 0 1 1 14.2 33.05" fill="none" stroke="#DFE1E5" stroke-width="1.9"/><circle cx="18.5" cy="21.3" r="3.8" fill="none" stroke="#DFE1E5" stroke-width="1.9"/><path d="M6 21.3 H14.7" stroke="#DFE1E5" stroke-width="1.9"/></svg>
<svg style="left:1236px;top:360px" width="38" height="38"><path d="M11 31.6 C6.5 30.5, 6 25, 8.5 21.5 C11 18.3, 15 17.3, 19 16.5 C23 15.5, 26 12, 27.4 7.6 C30 12, 31 19, 30.2 24 C29 30, 22.5 32.3, 16.5 32.2 C14 32.1, 12 32, 11 31.6 Z" fill="none" stroke="#DFE1E5" stroke-width="1.9" stroke-linejoin="round"/><path d="M11 31.6 C17 30, 23 26.5, 26.8 19.8" fill="none" stroke="#DFE1E5" stroke-width="1.7"/></svg>
<!-- STATUS BAR -->
<div class="a" style="left:0;top:680px;width:1280px;height:40px;background:#2B2B31"></div>
<div class="a" id="statb"></div>
<svg style="left:8px;top:697px" width="6" height="10"><path d="M1.5 1.5 L4.5 4.5 L1.5 7.5" fill="none" stroke="#A9ACB3" stroke-width="1.4"/></svg>
<svg style="left:25px;top:695px" width="14" height="14"><rect x="1.5" y="1.5" width="11" height="11" rx="2.5" fill="#25324D" stroke="#548AF7" stroke-width="1.7"/></svg>
<div class="t" style="left:42.5px;top:689.2px;font-size:19.5px;color:#A9ACB3">main</div>
<svg style="left:97px;top:695px" width="9" height="14"><path d="M1.5 1.5 L7 7 L1.5 12.5" fill="none" stroke="#A9ACB3" stroke-width="1.6"/></svg>
<div class="t" style="left:116.5px;top:689.2px;font-size:19.5px;color:#A9ACB3">java</div>
<svg style="left:165px;top:695px" width="9" height="14"><path d="M1.5 1.5 L7 7 L1.5 12.5" fill="none" stroke="#A9ACB3" stroke-width="1.6"/></svg>
<div class="t" style="left:185.5px;top:689.2px;font-size:19.5px;color:#A9ACB3">org</div>
<svg style="left:228px;top:695px" width="9" height="14"><path d="M1.5 1.5 L7 7 L1.5 12.5" fill="none" stroke="#A9ACB3" stroke-width="1.6"/></svg>
<div class="t" style="left:249px;top:689.2px;font-size:19.5px;color:#A9ACB3">springframework</div>
<svg style="left:407px;top:695px" width="9" height="14"><path d="M1.5 1.5 L7 7 L1.5 12.5" fill="none" stroke="#A9ACB3" stroke-width="1.6"/></svg>
<div class="t" style="left:428px;top:689.2px;font-size:19.5px;color:#A9ACB3">samples</div>
<svg style="left:511.5px;top:695px" width="9" height="14"><path d="M1.5 1.5 L7 7 L1.5 12.5" fill="none" stroke="#A9ACB3" stroke-width="1.6"/></svg>
<div class="t" style="left:532.5px;top:689.2px;font-size:19.5px;color:#A9ACB3">petclinic</div>
<svg style="left:618px;top:695px" width="9" height="14"><path d="M1.5 1.5 L7 7 L1.5 12.5" fill="none" stroke="#A9ACB3" stroke-width="1.6"/></svg>
<div class="t" style="left:639px;top:689.2px;font-size:19.5px;color:#A9ACB3">owner</div>
<svg style="left:705px;top:695px" width="9" height="14"><path d="M1.5 1.5 L7 7 L1.5 12.5" fill="none" stroke="#A9ACB3" stroke-width="1.6"/></svg>
<svg style="left:727px;top:691px" width="21" height="21"><circle cx="10" cy="10.5" r="9" fill="#25304D" stroke="#6C8FEF" stroke-width="1.7"/><path d="M13 7.6 A4.2 4.2 0 1 0 13 13.4" fill="none" stroke="#8DA9F5" stroke-width="1.6"/></svg>
<div class="t" style="left:754px;top:689.2px;font-size:19.5px;color:#A9ACB3">OwnerController</div>
<svg style="left:908px;top:695px" width="9" height="14"><path d="M1.5 1.5 L7 7 L1.5 12.5" fill="none" stroke="#A9ACB3" stroke-width="1.6"/></svg>
<svg style="left:930px;top:691px" width="21" height="21"><circle cx="10.3" cy="10.5" r="9" fill="#4A2A26" stroke="#D9695B" stroke-width="1.7"/><path d="M5.8 14.5 V8.5 Q5.8 6.8 7.7 6.8 Q9.7 6.8 10.3 8.5 V14.5 M10.3 8.5 Q10.9 6.8 12.9 6.8 Q14.8 6.8 14.8 8.5 V14.5" fill="none" stroke="#E58A7D" stroke-width="1.5"/></svg>
<div class="t" style="left:956px;top:689.2px;font-size:19.8px;color:#A9ACB3">initCreationForm</div>
<svg style="left:1154.7px;top:688.1px" width="28" height="28"><path d="M5.00 8.42 L5.89 7.77 L6.85 7.21 L7.88 6.74 L8.95 6.37 L10.05 6.10 L11.16 5.92 L12.29 5.85 L13.40 5.88 L14.49 6.00 L15.55 6.22 L16.56 6.52 L17.51 6.91 L18.40 7.37 L19.21 7.90 L19.94 8.49 L20.58 9.14 L21.12 9.83 L21.56 10.56 L21.89 11.31 L22.13 12.07 L22.25 12.84 L22.28 13.61 L22.20 14.37 L22.02 15.10 L21.75 15.81 L21.40 16.47 L20.96 17.10 L20.45 17.67 L19.87 18.18 L19.24 18.63 L18.56 19.02 L17.84 19.34 L17.10 19.59 L16.34 19.77 L15.58 19.88 L14.82 19.92 L14.07 19.89 L13.34 19.79 L12.64 19.64 L11.98 19.42 L11.37 19.15 L10.80 18.84 L10.30 18.48 L9.86 18.08 L9.48 17.66 L9.17 17.21 L8.93 16.75 L8.75 16.28 L8.65 15.81 L8.62 15.35 L8.65 14.89 L8.74 14.45 L8.89 14.04 L9.10 13.65 L9.35 13.30 L9.64 12.98 L9.97 12.70 L10.32 12.47 L10.70 12.27 L11.08 12.13 L11.48 12.02 L11.87 11.97 L12.26 11.95 L12.63 11.98 L12.97 12.05 L13.29 12.15 L13.58 12.29 L13.82 12.45 L14.02 12.64 L14.17 12.86 L14.26 13.09 L14.25 13.39 M22.20 20.18 L21.31 20.83 L20.35 21.39 L19.32 21.86 L18.25 22.23 L17.15 22.50 L16.04 22.68 L14.91 22.75 L13.80 22.72 L12.71 22.60 L11.65 22.38 L10.64 22.08 L9.69 21.69 L8.80 21.23 L7.99 20.70 L7.26 20.11 L6.62 19.46 L6.08 18.77 L5.64 18.04 L5.31 17.29 L5.07 16.53 L4.95 15.76 L4.92 14.99 L5.00 14.23 L5.18 13.50 L5.45 12.79 L5.80 12.13 L6.24 11.50 L6.75 10.93 L7.33 10.42 L7.96 9.97 L8.64 9.58 L9.36 9.26 L10.10 9.01 L10.86 8.83 L11.62 8.72 L12.38 8.68 L13.13 8.71 L13.86 8.81 L14.56 8.96 L15.22 9.18 L15.83 9.45 L16.40 9.76 L16.90 10.12 L17.34 10.52 L17.72 10.94 L18.03 11.39 L18.27 11.85 L18.45 12.32 L18.55 12.79 L18.58 13.25 L18.55 13.71 L18.46 14.15 L18.31 14.56 L18.10 14.95 L17.85 15.30 L17.56 15.62 L17.23 15.90 L16.88 16.13 L16.50 16.33 L16.12 16.47 L15.72 16.58 L15.33 16.63 L14.94 16.65 L14.57 16.62 L14.23 16.55 L13.91 16.45 L13.62 16.31 L13.38 16.15 L13.18 15.96 L13.03 15.74 L12.94 15.51 L12.95 15.21" fill="none" stroke="#DFE1E5" stroke-width="1.8" stroke-linecap="round" stroke-linejoin="round"/></svg>
<div class="t" style="left:1201.5px;top:689.2px;font-size:19.5px;color:#A9ACB3">Tab</div>
<svg style="left:1236px;top:688px" width="26" height="28"><path d="M10.5 23.8 H5 Q3 23.8 3 21.8 V9.5 L9.5 3.3 H15.5 Q17.5 3.3 17.5 5.3 V12.8 M3 9.5 H7.5 Q9.5 9.5 9.5 7.5 V3.3" fill="none" stroke="#B4B7BD" stroke-width="1.7" stroke-linejoin="round"/><circle cx="16.2" cy="20" r="7.3" fill="#2B2B31"/><path d="M19.70 20.00 L19.74 20.23 L19.87 20.48 L20.11 20.78 L20.64 21.19 L21.14 21.68 L21.28 22.10 L21.27 22.50 L21.14 22.85 L20.90 23.14 L20.56 23.34 L20.12 23.44 L19.45 23.25 L18.83 22.99 L18.46 22.94 L18.17 22.95 L17.95 23.03 L17.77 23.18 L17.62 23.42 L17.48 23.77 L17.39 24.44 L17.22 25.12 L16.92 25.45 L16.57 25.64 L16.20 25.70 L15.83 25.64 L15.48 25.45 L15.18 25.12 L15.01 24.44 L14.92 23.77 L14.78 23.42 L14.63 23.18 L14.45 23.03 L14.23 22.95 L13.94 22.94 L13.57 22.99 L12.95 23.25 L12.28 23.44 L11.84 23.34 L11.50 23.14 L11.26 22.85 L11.13 22.50 L11.12 22.10 L11.26 21.68 L11.76 21.19 L12.29 20.78 L12.53 20.48 L12.66 20.23 L12.70 20.00 L12.66 19.77 L12.53 19.52 L12.29 19.22 L11.76 18.81 L11.26 18.32 L11.12 17.90 L11.13 17.50 L11.26 17.15 L11.50 16.86 L11.84 16.66 L12.28 16.56 L12.95 16.75 L13.57 17.01 L13.94 17.06 L14.23 17.05 L14.45 16.97 L14.63 16.82 L14.78 16.58 L14.92 16.23 L15.01 15.56 L15.18 14.88 L15.48 14.55 L15.83 14.36 L16.20 14.30 L16.57 14.36 L16.92 14.55 L17.22 14.88 L17.39 15.56 L17.48 16.23 L17.62 16.58 L17.77 16.82 L17.95 16.97 L18.17 17.05 L18.46 17.06 L18.83 17.01 L19.45 16.75 L20.12 16.56 L20.56 16.66 L20.90 16.86 L21.14 17.15 L21.27 17.50 L21.28 17.90 L21.14 18.32 L20.64 18.81 L20.11 19.22 L19.87 19.52 L19.74 19.77 L19.70 20.00 Z" fill="none" stroke="#B4B7BD" stroke-width="1.6" stroke-linejoin="round"/><circle cx="16.2" cy="20" r="1.6" fill="#B4B7BD"/></svg>
</body></html>
